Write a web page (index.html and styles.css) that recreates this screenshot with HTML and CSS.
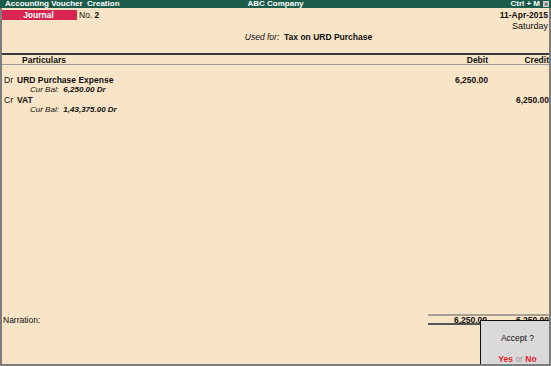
FILE: index.html
```html
<!DOCTYPE html>
<html>
<head>
<meta charset="utf-8">
<link rel="stylesheet" href="styles.css">
</head>
<body>
<div class="app">
  <div class="titlebar">
    <span class="t-left">Accounting Voucher&nbsp; Creation</span>
    <span class="t-mid">ABC Company</span>
    <span class="t-right">Ctrl + M <span class="xbox">✕</span></span>
  </div>
  <div class="main">
    <div class="head">
      <div class="head-left">
        <span class="vtype">Journal</span>
        <span class="vno">No. <b>2</b></span>
      </div>
      <div class="head-right">
        <div class="date">11-Apr-2015</div>
        <div class="day">Saturday</div>
      </div>
    </div>
    <div class="usedfor"><i>Used for:</i>&nbsp; <b>Tax on URD Purchase</b></div>
    <div class="colhead">
      <span class="c-part">Particulars</span>
      <span class="c-dr">Debit</span>
      <span class="c-cr">Credit</span>
    </div>
    <div class="entries">
      <div class="row">
        <span class="drcr">Dr</span><span class="ledger">URD Purchase Expense</span>
        <span class="amt-dr">6,250.00</span><span class="amt-cr"></span>
      </div>
      <div class="bal"><i>Cur Bal:</i>&nbsp; <b><i>6,250.00 Dr</i></b></div>
      <div class="row">
        <span class="drcr">Cr</span><span class="ledger">VAT</span>
        <span class="amt-dr"></span><span class="amt-cr">6,250.00</span>
      </div>
      <div class="bal"><i>Cur Bal:</i>&nbsp; <b><i>1,43,375.00 Dr</i></b></div>
    </div>
    <div class="foot">
      <span class="narr">Narration:</span>
      <div class="totals">
        <span class="amt-dr">6,250.00</span><span class="amt-cr">6,250.00</span>
      </div>
    </div>
    <div class="accept">
      <div class="q">Accept ?</div>
      <div class="yn"><span class="red">Yes</span> <span class="or">or</span> <span class="red">No</span></div>
    </div>
  </div>
</div>
</body>
</html>
```
FILE: styles.css
```css
* { box-sizing: border-box; }
html, body { margin: 0; padding: 0; }
body {
  width: 551px;
  height: 366px;
  overflow: hidden;
  font-family: "Liberation Sans", Arial, sans-serif;
  font-size: 8.5px;
  color: #111;
  background: #f8e4c6;
}
.app {
  width: 551px;
  height: 366px;
  display: flex;
  flex-direction: column;
}
.titlebar {
  height: 8px;
  background: #1b5b4a;
  color: #fff;
  font-weight: bold;
  font-size: 8px;
  line-height: 8px;
  display: flex;
  justify-content: space-between;
  padding: 0 2px 0 5px;
  position: relative;
}
.t-mid {
  position: absolute;
  left: 0; right: 0;
  text-align: center;
  pointer-events: none;
}
.t-right { display: flex; align-items: center; gap: 3px; }
.xbox {
  display: inline-block;
  width: 6px; height: 6px;
  background: #cfcfcf;
  color: #444;
  font-size: 5px;
  line-height: 6px;
  text-align: center;
}
.main {
  flex: 1;
  position: relative;
  border-left: 2px solid #7d7d7d;
  border-right: 2px solid #7d7d7d;
  border-bottom: 2px solid #7d7d7d;
  display: flex;
  flex-direction: column;
  overflow: hidden;
}
.head {
  display: flex;
  justify-content: space-between;
  padding-top: 2px;
}
.head-left { display: flex; align-items: center; gap: 2px; margin-left: -2px; height: 10px; }
.vtype {
  width: 77px;
  height: 10px;
  background: #d8254f;
  color: #fff;
  font-weight: bold;
  text-align: center;
  line-height: 10px;
}
.vno { line-height: 10px; }
.head-right { text-align: right; padding-right: 1px; line-height: 10px; }
.date { font-weight: bold; }
.day { font-size: 9px; padding-top: 1px; }
.usedfor {
  text-align: center;
  margin-left: 66px;
  line-height: 10px;
  margin-top: 1px;
}
.colhead {
  margin-top: 11px;
  height: 12px;
  border-top: 2px solid #3a3a3a;
  border-bottom: 1px solid #a09a90;
  display: flex;
  align-items: center;
  font-weight: bold;
}
.c-part { flex: 1; padding-left: 20px; }
.c-dr { width: 60px; text-align: right; padding-right: 1px; }
.c-cr { width: 60px; text-align: right; }
.entries { padding-top: 10px; }
.row { display: flex; line-height: 10px; height: 10px; }
.drcr { width: 15px; padding-left: 2px; }
.ledger { flex: 1; font-weight: bold; }
.amt-dr { width: 60px; text-align: right; font-weight: bold; padding-right: 1px; }
.amt-cr { width: 60px; text-align: right; font-weight: bold; }
.bal { padding-left: 28px; line-height: 9px; height: 10px; font-size: 8px; }
.foot {
  margin-top: auto;
  margin-bottom: 39px;
  display: flex;
  align-items: center;
  justify-content: space-between;
}
.narr { padding-left: 1px; }
.totals {
  width: 121px;
  display: flex;
  border-top: 2px solid #a8a095;
  border-bottom: 2px solid #555;
  height: 11px;
  align-items: center;
}
.totals .amt-dr { width: 60px; }
.totals .amt-cr { width: 61px; }
.accept {
  position: absolute;
  left: 478px;
  top: 312px;
  width: 75px;
  height: 50px;
  background: #dadada;
  border: 1px solid #111;
  text-align: center;
}
.q { margin-top: 12px; font-size: 8.5px; }
.yn { margin-top: 11px; font-weight: bold; }
.red { color: #e5202a; }
.or { color: #999; font-weight: normal; }
```
